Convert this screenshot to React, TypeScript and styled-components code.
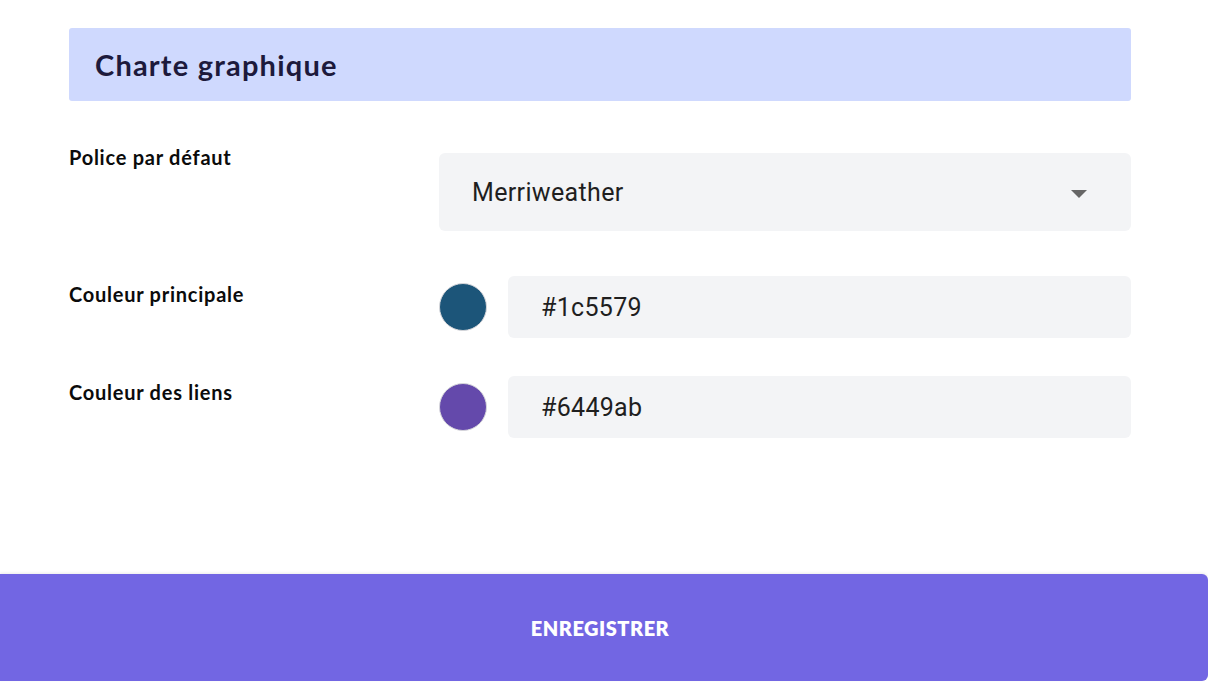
import React from "react";
import styled, { createGlobalStyle } from "styled-components";

const Global = createGlobalStyle`
  html, body { margin: 0; padding: 0; background: #ffffff; }
  body { font-family: Lato, "Noto Sans", sans-serif; overflow: hidden; }
  * { box-sizing: border-box; }
`;

const Page = styled.div`
  width: 1208px;
  height: 682px;
  display: flex;
  flex-direction: column;
`;

const Content = styled.main`
  flex: 1;
  padding: 28px 77px 0 69px;
`;

const SectionHeader = styled.h2`
  margin: 0;
  height: 73px;
  display: flex;
  align-items: center;
  padding-left: 26px;
  background: #cfd9fe;
  border-radius: 3px;
  color: #1d1a3c;
  font-family: Lato, sans-serif;
  font-weight: 700;
  font-size: 29px;
  letter-spacing: 1.2px;
`;

const Form = styled.div`
  display: flex;
  flex-direction: column;
`;

const Row = styled.div<{ $top: number }>`
  display: grid;
  grid-template-columns: 370px 1fr;
  align-items: start;
  margin-top: ${(p) => p.$top}px;
`;

const Label = styled.label<{ $offset: number }>`
  padding-top: ${(p) => p.$offset}px;
  font-family: Lato, sans-serif;
  font-weight: 700;
  font-size: 20px;
  line-height: 22px;
  letter-spacing: 0.75px;
  color: #0b0b0b;
`;

const Select = styled.div<{ $shift: number }>`
  margin-top: ${(p) => p.$shift}px;
  height: 78px;
  background: #f3f4f6;
  border-radius: 6px;
  display: flex;
  align-items: center;
  justify-content: space-between;
  padding: 0 44px 0 33px;
  font-family: Roboto, sans-serif;
  font-size: 25px;
  letter-spacing: 0.35px;
  color: #1f1f1f;
`;

const Caret = styled.span`
  width: 0;
  height: 0;
  border-left: 8px solid transparent;
  border-right: 8px solid transparent;
  border-top: 8px solid #666666;
  margin-top: 4px;
`;

const ColorField = styled.div`
  display: flex;
  align-items: center;
  gap: 21px;
`;

const Swatch = styled.span<{ $color: string }>`
  flex: none;
  width: 48px;
  height: 48px;
  border-radius: 50%;
  background: ${(p) => p.$color};
  border: 1px solid #d6d6da;
`;

const HexInput = styled.div`
  flex: 1;
  height: 62px;
  background: #f3f4f6;
  border-radius: 6px;
  display: flex;
  align-items: center;
  padding-left: 33px;
  font-family: Roboto, sans-serif;
  font-size: 25px;
  letter-spacing: 0.3px;
  color: #1f1f1f;
`;

const SaveButton = styled.button`
  flex: none;
  width: 1208px;
  height: 107px;
  margin-bottom: 1px;
  border: none;
  border-radius: 0 6px 6px 0;
  background: #7266e3;
  box-shadow: 0 -1px 3px rgba(0, 0, 0, 0.08);
  color: #ffffff;
  font-family: Lato, sans-serif;
  font-weight: 800;
  font-size: 20px;
  letter-spacing: 0.5px;
  cursor: pointer;
  padding: 0 8px 0 0;
`;

export default function App() {
  return (
    <Page>
      <Global />
      <Content>
        <SectionHeader>Charte graphique</SectionHeader>
        <Form>
          <Row $top={45}>
            <Label $offset={0}>Police par défaut</Label>
            <Select $shift={7}>
              <span>Merriweather</span>
              <Caret />
            </Select>
          </Row>
          <Row $top={45}>
            <Label $offset={7}>Couleur principale</Label>
            <ColorField>
              <Swatch $color="#1c5579" />
              <HexInput>#1c5579</HexInput>
            </ColorField>
          </Row>
          <Row $top={38}>
            <Label $offset={5}>Couleur des liens</Label>
            <ColorField>
              <Swatch $color="#6449ab" />
              <HexInput>#6449ab</HexInput>
            </ColorField>
          </Row>
        </Form>
      </Content>
      <SaveButton>ENREGISTRER</SaveButton>
    </Page>
  );
}
